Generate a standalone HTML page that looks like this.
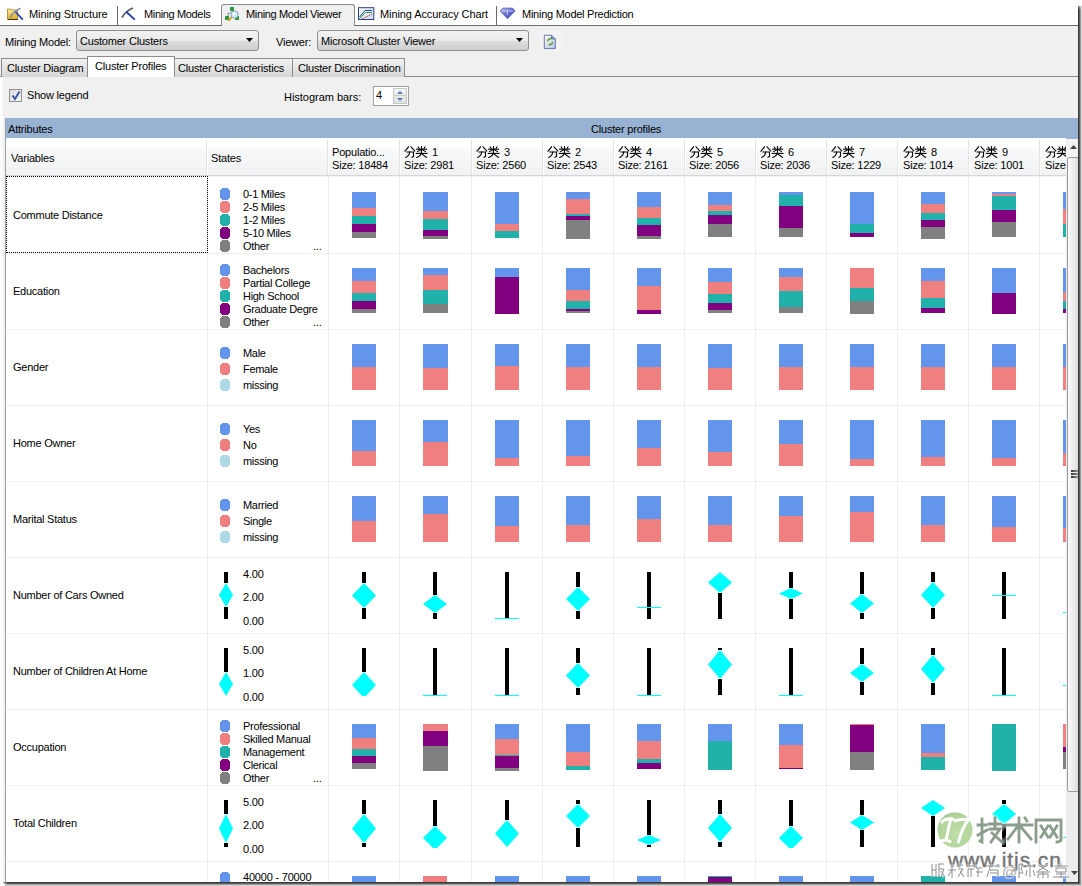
<!DOCTYPE html><html><head><meta charset="utf-8"><style>
html,body{margin:0;padding:0;}
body{width:1082px;height:886px;position:relative;overflow:hidden;background:#F0F0F0;font-family:"Liberation Sans", sans-serif;}
.t{position:absolute;white-space:nowrap;line-height:13px;font-size:11px;font-family:"Liberation Sans", sans-serif;letter-spacing:-0.2px;}
div{box-sizing:border-box;}
.dot{position:absolute;width:10px;height:12px;clip-path:polygon(2px 0,8px 0,8px 1px,9px 1px,9px 2px,10px 2px,10px 10px,9px 10px,9px 11px,8px 11px,8px 12px,2px 12px,2px 11px,1px 11px,1px 10px,0 10px,0 2px,1px 2px,1px 1px,2px 1px);}
</style></head><body>
<div style="position:absolute;left:0px;top:0px;width:1082px;height:25px;background:#FFFFFF;"></div>
<div style="position:absolute;left:0px;top:25px;width:1078px;height:1px;background:#6E6E6E;"></div>
<div style="position:absolute;left:221px;top:4px;width:134px;height:22px;background:#F0F0F0;border:1px solid #8C8C8C;border-bottom:none;border-radius:3px 3px 0 0;"></div>
<div style="position:absolute;left:117px;top:6px;width:1px;height:19px;background:#6A6A6A;"></div>
<div style="position:absolute;left:496px;top:6px;width:1px;height:19px;background:#6A6A6A;"></div>
<svg style="position:absolute;left:6px;top:7px" width="19" height="15" viewBox="6 7 19 15">
<defs><linearGradient id="fy" x1="0" y1="0" x2="0" y2="1"><stop offset="0" stop-color="#FCE9A0"/><stop offset="1" stop-color="#E3A812"/></linearGradient></defs>
<path d="M7.5 9 H11 L12 10 H17.5 V19.5 H7.5 Z" fill="url(#fy)" stroke="#A88420" stroke-width="0.8"/>
<path d="M8 19.5 H18" stroke="#3A3020" stroke-width="1"/>
<path d="M10 17.5 Q14 11 20.5 8.3" stroke="#8894A8" stroke-width="1.6" fill="none"/>
<path d="M15.5 12 L22.8 19.6" stroke="#1E3CB0" stroke-width="1.7"/></svg>
<div class="t" style="left:29px;top:8px;color:#000;letter-spacing:-0.1px;">Mining Structure</div>
<svg style="position:absolute;left:121px;top:7px" width="16" height="14" viewBox="121 7 16 14">
<path d="M122 17.5 Q125.5 11 133 8" stroke="#555C66" stroke-width="1.7" fill="none"/>
<path d="M126.5 12 L134.8 19.6" stroke="#1E3CB0" stroke-width="1.7"/></svg>
<div class="t" style="left:144px;top:8px;color:#000;letter-spacing:-0.35px;">Mining Models</div>
<svg style="position:absolute;left:224px;top:6px" width="18" height="17" viewBox="224 6 18 17">
<path d="M228 17 V13 H232 M233 9 V12 M237 15 L238 17" stroke="#888" stroke-width="1" fill="none"/>
<rect x="230" y="7" width="4" height="4" fill="#2E9A40"/><rect x="225" y="16" width="4" height="4" fill="#2E9A40"/><rect x="235" y="16" width="4" height="4" fill="#2E9A40"/>
<path d="M231.5 17 L228.5 21" stroke="#D8A010" stroke-width="2"/>
<circle cx="234.5" cy="14.5" r="3.6" fill="#CDEBFA" stroke="#88AACC" stroke-width="1"/><circle cx="233.8" cy="13.8" r="1.5" fill="#FFFFFF"/></svg>
<div class="t" style="left:246px;top:8px;color:#000;letter-spacing:-0.35px;">Mining Model Viewer</div>
<svg style="position:absolute;left:357px;top:7px" width="18" height="14" viewBox="357 7 18 14">
<defs><linearGradient id="fc" x1="0" y1="0" x2="1" y2="1"><stop offset="0" stop-color="#FFFFFF"/><stop offset="1" stop-color="#C8D8F0"/></linearGradient></defs>
<rect x="358.5" y="7.7" width="15.3" height="11.8" fill="url(#fc)" stroke="#2A3F7A" stroke-width="1"/>
<path d="M359.5 17 L365 10.5 H372" stroke="#2040B0" stroke-width="1" fill="none"/>
<path d="M359.5 18.5 L365.5 12.5 H372" stroke="#30A040" stroke-width="1" fill="none"/>
<path d="M362 19 L372 14" stroke="#C02020" stroke-width="1" stroke-dasharray="1.5 1" fill="none"/></svg>
<div class="t" style="left:380px;top:8px;color:#000;letter-spacing:-0.1px;">Mining Accuracy Chart</div>
<svg style="position:absolute;left:499px;top:7px" width="17" height="13" viewBox="499 7 17 13">
<defs><linearGradient id="fd" x1="0" y1="0" x2="1" y2="1"><stop offset="0" stop-color="#B8C0F8"/><stop offset="0.5" stop-color="#6670D0"/><stop offset="1" stop-color="#3A3E98"/></linearGradient></defs>
<path d="M500 11 L503 8 H512.5 L515 11 L507.5 18.7 Z" fill="url(#fd)" stroke="#4048A8" stroke-width="0.6"/>
<path d="M502 11 H513 M507.5 10 V15" stroke="#FFFFFF" stroke-width="0.7" opacity="0.8"/></svg>
<div class="t" style="left:522px;top:8px;color:#000;letter-spacing:-0.26px;">Mining Model Prediction</div>
<div class="t" style="left:5px;top:36px;color:#000;">Mining Model:</div>
<div style="position:absolute;left:76px;top:30px;width:183px;height:21px;border:1px solid #8E8F8F;border-radius:3px;background:linear-gradient(#F2F2F2 0%,#EBEBEB 50%,#DDDDDD 51%,#CFCFCF 100%);"></div>
<div class="t" style="left:80px;top:35px;color:#000;">Customer Clusters</div>
<svg style="position:absolute;left:246px;top:38px" width="8" height="5"><path d="M0 0 H7 L3.5 4 Z" fill="#000"/></svg>
<div class="t" style="left:276px;top:36px;color:#000;">Viewer:</div>
<div style="position:absolute;left:317px;top:30px;width:212px;height:21px;border:1px solid #8E8F8F;border-radius:3px;background:linear-gradient(#F2F2F2 0%,#EBEBEB 50%,#DDDDDD 51%,#CFCFCF 100%);"></div>
<div class="t" style="left:321px;top:35px;color:#000;">Microsoft Cluster Viewer</div>
<svg style="position:absolute;left:516px;top:38px" width="8" height="5"><path d="M0 0 H7 L3.5 4 Z" fill="#000"/></svg>
<div style="position:absolute;left:539px;top:30px;width:23px;height:22px;background:#F3F3F3;"></div>
<svg style="position:absolute;left:543px;top:34px" width="14" height="16" viewBox="543 34 14 16">
<defs><linearGradient id="fr" x1="0" y1="0" x2="1" y2="1"><stop offset="0" stop-color="#FFFFFF"/><stop offset="1" stop-color="#B8C0E0"/></linearGradient></defs>
<path d="M544.3 35.2 H551.5 L555.3 39 V48.6 H544.3 Z" fill="url(#fr)" stroke="#5A6A9A" stroke-width="0.9"/>
<path d="M551.5 35.2 V39 H555.3" fill="#8090C0" stroke="#4A5A8A" stroke-width="0.6"/>
<path d="M547.5 41.5 Q547.5 38.8 550.8 38.6" stroke="#5A9A20" stroke-width="1.2" fill="none"/><path d="M550 37.4 L551.8 38.6 L550 39.8 Z" fill="#5A9A20"/>
<path d="M552.5 42 Q552.5 44.6 549.2 44.8" stroke="#5A9A20" stroke-width="1.2" fill="none"/><path d="M550 43.6 L548.2 44.8 L550 46 Z" fill="#5A9A20"/></svg>
<div style="position:absolute;left:0px;top:76px;width:1082px;height:1px;background:#8C8C8C;"></div>
<div style="position:absolute;left:1px;top:58px;width:87px;height:19px;border:1px solid #8C8C8C;border-bottom:none;background:linear-gradient(#F2F2F2,#E4E4E4 50%,#D6D6D6);"></div>
<div class="t" style="left:7px;top:62px;color:#000;">Cluster Diagram</div>
<div style="position:absolute;left:174px;top:58px;width:119px;height:19px;border:1px solid #8C8C8C;border-bottom:none;background:linear-gradient(#F2F2F2,#E4E4E4 50%,#D6D6D6);"></div>
<div class="t" style="left:178px;top:62px;color:#000;">Cluster Characteristics</div>
<div style="position:absolute;left:292px;top:58px;width:113px;height:19px;border:1px solid #8C8C8C;border-bottom:none;background:linear-gradient(#F2F2F2,#E4E4E4 50%,#D6D6D6);"></div>
<div class="t" style="left:298px;top:62px;color:#000;">Cluster Discrimination</div>
<div style="position:absolute;left:87px;top:56px;width:88px;height:21px;border:1px solid #8C8C8C;border-bottom:none;background:#FFFFFF;"></div>
<div class="t" style="left:95px;top:60px;color:#000;">Cluster Profiles</div>
<div style="position:absolute;left:3px;top:77px;width:1079px;height:1px;background:#F0F0F0;"></div>
<div style="position:absolute;left:0px;top:77px;width:3px;height:810px;background:#FCFCFC;"></div>
<div style="position:absolute;left:9px;top:89px;width:13px;height:13px;border:1px solid #8E8F8F;background:linear-gradient(135deg,#DCDCDC,#F6F6F6);"></div>
<svg style="position:absolute;left:11px;top:90px" width="10" height="11"><path d="M1.5 5.5 L4 9 L8.5 1.5" stroke="#3B56A8" stroke-width="2" fill="none"/></svg>
<div class="t" style="left:27px;top:89px;color:#000;">Show legend</div>
<div class="t" style="left:284px;top:91px;color:#000;letter-spacing:-0.03px;">Histogram bars:</div>
<div style="position:absolute;left:373px;top:86px;width:36px;height:20px;border:1px solid #A0A0A0;background:#fff;"></div>
<div class="t" style="left:376px;top:89px;color:#000;">4</div>
<div style="position:absolute;left:393px;top:88px;width:14px;height:16px;border:1px solid #C8C8C8;background:linear-gradient(#F4F4F4,#E0E0E0);"></div>
<div style="position:absolute;left:394px;top:95px;width:12px;height:1px;background:#C8C8C8;"></div>
<svg style="position:absolute;left:396px;top:90px" width="8" height="13"><path d="M1 4 L4 1 L7 4 Z" fill="#5A78B8"/><path d="M1 8 L4 11 L7 8 Z" fill="#5A78B8"/></svg>
<div style="position:absolute;left:5px;top:118px;width:1073px;height:21px;background:#97B2D3;"></div>
<div class="t" style="left:8px;top:123px;color:#000;">Attributes</div>
<div class="t" style="left:591px;top:123px;color:#000;">Cluster profiles</div>
<div style="position:absolute;left:5px;top:138px;width:1061px;height:748px;background:#FFFFFF;"></div>
<div style="position:absolute;left:5px;top:118px;width:1px;height:768px;background:#9EA0AA;"></div>
<div style="position:absolute;left:6px;top:148px;width:1060px;height:27px;background:linear-gradient(#F8F9FA,#F1F2F4);"></div>
<div style="position:absolute;left:6px;top:175px;width:1060px;height:1px;background:#D5D5D5;"></div>
<div style="position:absolute;left:206px;top:140px;width:1px;height:35px;background:#E3E3E3;"></div>
<div style="position:absolute;left:207px;top:148px;width:1px;height:27px;background:#FFFFFF;"></div>
<div style="position:absolute;left:327px;top:140px;width:1px;height:35px;background:#E3E3E3;"></div>
<div style="position:absolute;left:328px;top:148px;width:1px;height:27px;background:#FFFFFF;"></div>
<div style="position:absolute;left:399px;top:140px;width:1px;height:35px;background:#E3E3E3;"></div>
<div style="position:absolute;left:400px;top:148px;width:1px;height:27px;background:#FFFFFF;"></div>
<div style="position:absolute;left:471px;top:140px;width:1px;height:35px;background:#E3E3E3;"></div>
<div style="position:absolute;left:472px;top:148px;width:1px;height:27px;background:#FFFFFF;"></div>
<div style="position:absolute;left:542px;top:140px;width:1px;height:35px;background:#E3E3E3;"></div>
<div style="position:absolute;left:543px;top:148px;width:1px;height:27px;background:#FFFFFF;"></div>
<div style="position:absolute;left:613px;top:140px;width:1px;height:35px;background:#E3E3E3;"></div>
<div style="position:absolute;left:614px;top:148px;width:1px;height:27px;background:#FFFFFF;"></div>
<div style="position:absolute;left:684px;top:140px;width:1px;height:35px;background:#E3E3E3;"></div>
<div style="position:absolute;left:685px;top:148px;width:1px;height:27px;background:#FFFFFF;"></div>
<div style="position:absolute;left:755px;top:140px;width:1px;height:35px;background:#E3E3E3;"></div>
<div style="position:absolute;left:756px;top:148px;width:1px;height:27px;background:#FFFFFF;"></div>
<div style="position:absolute;left:826px;top:140px;width:1px;height:35px;background:#E3E3E3;"></div>
<div style="position:absolute;left:827px;top:148px;width:1px;height:27px;background:#FFFFFF;"></div>
<div style="position:absolute;left:897px;top:140px;width:1px;height:35px;background:#E3E3E3;"></div>
<div style="position:absolute;left:898px;top:148px;width:1px;height:27px;background:#FFFFFF;"></div>
<div style="position:absolute;left:968px;top:140px;width:1px;height:35px;background:#E3E3E3;"></div>
<div style="position:absolute;left:969px;top:148px;width:1px;height:27px;background:#FFFFFF;"></div>
<div style="position:absolute;left:1039px;top:140px;width:1px;height:35px;background:#E3E3E3;"></div>
<div style="position:absolute;left:1040px;top:148px;width:1px;height:27px;background:#FFFFFF;"></div>
<div class="t" style="left:11px;top:152px;color:#000;">Variables</div>
<div class="t" style="left:211px;top:152px;color:#000;">States</div>
<div class="t" style="left:332px;top:146px;color:#000;">Populatio...</div>
<div class="t" style="left:332px;top:159px;color:#000;">Size: 18484</div>
<svg style="position:absolute;left:404px;top:146px" width="24" height="12" viewBox="0 0 24 12"><g fill="none" stroke="#000" stroke-width="1.1" stroke-linecap="square">
<path d="M4.5 0.8 L1 5.2"/><path d="M7 0.8 L10.8 5"/><path d="M3 6 H9.5 V10.5 L8 11.3"/><path d="M5.6 6.2 Q5.4 9.6 1.8 11.4"/>
<path d="M14.2 1 L15.2 2.4"/><path d="M21 1 L20 2.4"/><path d="M17.5 0.3 V5"/><path d="M12.6 3.2 H22.6"/><path d="M17.3 3.4 L13.5 5.6"/><path d="M17.7 3.4 L21.5 5.6"/>
<path d="M12.3 7.4 H23"/><path d="M17.5 5.6 Q17.4 9.8 12.8 11.5"/><path d="M17.8 8 L22.5 11.4"/></g></svg>
<div class="t" style="left:432px;top:146px;color:#000;">1</div>
<div class="t" style="left:404px;top:159px;color:#000;">Size: 2981</div>
<svg style="position:absolute;left:476px;top:146px" width="24" height="12" viewBox="0 0 24 12"><g fill="none" stroke="#000" stroke-width="1.1" stroke-linecap="square">
<path d="M4.5 0.8 L1 5.2"/><path d="M7 0.8 L10.8 5"/><path d="M3 6 H9.5 V10.5 L8 11.3"/><path d="M5.6 6.2 Q5.4 9.6 1.8 11.4"/>
<path d="M14.2 1 L15.2 2.4"/><path d="M21 1 L20 2.4"/><path d="M17.5 0.3 V5"/><path d="M12.6 3.2 H22.6"/><path d="M17.3 3.4 L13.5 5.6"/><path d="M17.7 3.4 L21.5 5.6"/>
<path d="M12.3 7.4 H23"/><path d="M17.5 5.6 Q17.4 9.8 12.8 11.5"/><path d="M17.8 8 L22.5 11.4"/></g></svg>
<div class="t" style="left:504px;top:146px;color:#000;">3</div>
<div class="t" style="left:476px;top:159px;color:#000;">Size: 2560</div>
<svg style="position:absolute;left:547px;top:146px" width="24" height="12" viewBox="0 0 24 12"><g fill="none" stroke="#000" stroke-width="1.1" stroke-linecap="square">
<path d="M4.5 0.8 L1 5.2"/><path d="M7 0.8 L10.8 5"/><path d="M3 6 H9.5 V10.5 L8 11.3"/><path d="M5.6 6.2 Q5.4 9.6 1.8 11.4"/>
<path d="M14.2 1 L15.2 2.4"/><path d="M21 1 L20 2.4"/><path d="M17.5 0.3 V5"/><path d="M12.6 3.2 H22.6"/><path d="M17.3 3.4 L13.5 5.6"/><path d="M17.7 3.4 L21.5 5.6"/>
<path d="M12.3 7.4 H23"/><path d="M17.5 5.6 Q17.4 9.8 12.8 11.5"/><path d="M17.8 8 L22.5 11.4"/></g></svg>
<div class="t" style="left:575px;top:146px;color:#000;">2</div>
<div class="t" style="left:547px;top:159px;color:#000;">Size: 2543</div>
<svg style="position:absolute;left:618px;top:146px" width="24" height="12" viewBox="0 0 24 12"><g fill="none" stroke="#000" stroke-width="1.1" stroke-linecap="square">
<path d="M4.5 0.8 L1 5.2"/><path d="M7 0.8 L10.8 5"/><path d="M3 6 H9.5 V10.5 L8 11.3"/><path d="M5.6 6.2 Q5.4 9.6 1.8 11.4"/>
<path d="M14.2 1 L15.2 2.4"/><path d="M21 1 L20 2.4"/><path d="M17.5 0.3 V5"/><path d="M12.6 3.2 H22.6"/><path d="M17.3 3.4 L13.5 5.6"/><path d="M17.7 3.4 L21.5 5.6"/>
<path d="M12.3 7.4 H23"/><path d="M17.5 5.6 Q17.4 9.8 12.8 11.5"/><path d="M17.8 8 L22.5 11.4"/></g></svg>
<div class="t" style="left:646px;top:146px;color:#000;">4</div>
<div class="t" style="left:618px;top:159px;color:#000;">Size: 2161</div>
<svg style="position:absolute;left:689px;top:146px" width="24" height="12" viewBox="0 0 24 12"><g fill="none" stroke="#000" stroke-width="1.1" stroke-linecap="square">
<path d="M4.5 0.8 L1 5.2"/><path d="M7 0.8 L10.8 5"/><path d="M3 6 H9.5 V10.5 L8 11.3"/><path d="M5.6 6.2 Q5.4 9.6 1.8 11.4"/>
<path d="M14.2 1 L15.2 2.4"/><path d="M21 1 L20 2.4"/><path d="M17.5 0.3 V5"/><path d="M12.6 3.2 H22.6"/><path d="M17.3 3.4 L13.5 5.6"/><path d="M17.7 3.4 L21.5 5.6"/>
<path d="M12.3 7.4 H23"/><path d="M17.5 5.6 Q17.4 9.8 12.8 11.5"/><path d="M17.8 8 L22.5 11.4"/></g></svg>
<div class="t" style="left:717px;top:146px;color:#000;">5</div>
<div class="t" style="left:689px;top:159px;color:#000;">Size: 2056</div>
<svg style="position:absolute;left:760px;top:146px" width="24" height="12" viewBox="0 0 24 12"><g fill="none" stroke="#000" stroke-width="1.1" stroke-linecap="square">
<path d="M4.5 0.8 L1 5.2"/><path d="M7 0.8 L10.8 5"/><path d="M3 6 H9.5 V10.5 L8 11.3"/><path d="M5.6 6.2 Q5.4 9.6 1.8 11.4"/>
<path d="M14.2 1 L15.2 2.4"/><path d="M21 1 L20 2.4"/><path d="M17.5 0.3 V5"/><path d="M12.6 3.2 H22.6"/><path d="M17.3 3.4 L13.5 5.6"/><path d="M17.7 3.4 L21.5 5.6"/>
<path d="M12.3 7.4 H23"/><path d="M17.5 5.6 Q17.4 9.8 12.8 11.5"/><path d="M17.8 8 L22.5 11.4"/></g></svg>
<div class="t" style="left:788px;top:146px;color:#000;">6</div>
<div class="t" style="left:760px;top:159px;color:#000;">Size: 2036</div>
<svg style="position:absolute;left:831px;top:146px" width="24" height="12" viewBox="0 0 24 12"><g fill="none" stroke="#000" stroke-width="1.1" stroke-linecap="square">
<path d="M4.5 0.8 L1 5.2"/><path d="M7 0.8 L10.8 5"/><path d="M3 6 H9.5 V10.5 L8 11.3"/><path d="M5.6 6.2 Q5.4 9.6 1.8 11.4"/>
<path d="M14.2 1 L15.2 2.4"/><path d="M21 1 L20 2.4"/><path d="M17.5 0.3 V5"/><path d="M12.6 3.2 H22.6"/><path d="M17.3 3.4 L13.5 5.6"/><path d="M17.7 3.4 L21.5 5.6"/>
<path d="M12.3 7.4 H23"/><path d="M17.5 5.6 Q17.4 9.8 12.8 11.5"/><path d="M17.8 8 L22.5 11.4"/></g></svg>
<div class="t" style="left:859px;top:146px;color:#000;">7</div>
<div class="t" style="left:831px;top:159px;color:#000;">Size: 1229</div>
<svg style="position:absolute;left:903px;top:146px" width="24" height="12" viewBox="0 0 24 12"><g fill="none" stroke="#000" stroke-width="1.1" stroke-linecap="square">
<path d="M4.5 0.8 L1 5.2"/><path d="M7 0.8 L10.8 5"/><path d="M3 6 H9.5 V10.5 L8 11.3"/><path d="M5.6 6.2 Q5.4 9.6 1.8 11.4"/>
<path d="M14.2 1 L15.2 2.4"/><path d="M21 1 L20 2.4"/><path d="M17.5 0.3 V5"/><path d="M12.6 3.2 H22.6"/><path d="M17.3 3.4 L13.5 5.6"/><path d="M17.7 3.4 L21.5 5.6"/>
<path d="M12.3 7.4 H23"/><path d="M17.5 5.6 Q17.4 9.8 12.8 11.5"/><path d="M17.8 8 L22.5 11.4"/></g></svg>
<div class="t" style="left:931px;top:146px;color:#000;">8</div>
<div class="t" style="left:903px;top:159px;color:#000;">Size: 1014</div>
<svg style="position:absolute;left:974px;top:146px" width="24" height="12" viewBox="0 0 24 12"><g fill="none" stroke="#000" stroke-width="1.1" stroke-linecap="square">
<path d="M4.5 0.8 L1 5.2"/><path d="M7 0.8 L10.8 5"/><path d="M3 6 H9.5 V10.5 L8 11.3"/><path d="M5.6 6.2 Q5.4 9.6 1.8 11.4"/>
<path d="M14.2 1 L15.2 2.4"/><path d="M21 1 L20 2.4"/><path d="M17.5 0.3 V5"/><path d="M12.6 3.2 H22.6"/><path d="M17.3 3.4 L13.5 5.6"/><path d="M17.7 3.4 L21.5 5.6"/>
<path d="M12.3 7.4 H23"/><path d="M17.5 5.6 Q17.4 9.8 12.8 11.5"/><path d="M17.8 8 L22.5 11.4"/></g></svg>
<div class="t" style="left:1002px;top:146px;color:#000;">9</div>
<div class="t" style="left:974px;top:159px;color:#000;">Size: 1001</div>
<svg style="position:absolute;left:1045px;top:146px" width="24" height="12" viewBox="0 0 24 12"><g fill="none" stroke="#000" stroke-width="1.1" stroke-linecap="square">
<path d="M4.5 0.8 L1 5.2"/><path d="M7 0.8 L10.8 5"/><path d="M3 6 H9.5 V10.5 L8 11.3"/><path d="M5.6 6.2 Q5.4 9.6 1.8 11.4"/>
<path d="M14.2 1 L15.2 2.4"/><path d="M21 1 L20 2.4"/><path d="M17.5 0.3 V5"/><path d="M12.6 3.2 H22.6"/><path d="M17.3 3.4 L13.5 5.6"/><path d="M17.7 3.4 L21.5 5.6"/>
<path d="M12.3 7.4 H23"/><path d="M17.5 5.6 Q17.4 9.8 12.8 11.5"/><path d="M17.8 8 L22.5 11.4"/></g></svg>
<div class="t" style="left:1045px;top:159px;color:#000;">Size:</div>
<div style="position:absolute;left:6px;top:176px;width:1060px;height:1px;background:#F4F4F4;"></div>
<div style="position:absolute;left:6px;top:253px;width:1060px;height:1px;background:#EEEEEE;"></div>
<div style="position:absolute;left:6px;top:329px;width:1060px;height:1px;background:#EEEEEE;"></div>
<div style="position:absolute;left:6px;top:405px;width:1060px;height:1px;background:#EEEEEE;"></div>
<div style="position:absolute;left:6px;top:481px;width:1060px;height:1px;background:#EEEEEE;"></div>
<div style="position:absolute;left:6px;top:557px;width:1060px;height:1px;background:#EEEEEE;"></div>
<div style="position:absolute;left:6px;top:633px;width:1060px;height:1px;background:#EEEEEE;"></div>
<div style="position:absolute;left:6px;top:709px;width:1060px;height:1px;background:#EEEEEE;"></div>
<div style="position:absolute;left:6px;top:785px;width:1060px;height:1px;background:#EEEEEE;"></div>
<div style="position:absolute;left:6px;top:861px;width:1060px;height:1px;background:#EEEEEE;"></div>
<div style="position:absolute;left:207px;top:177px;width:1px;height:710px;background:#EEEEEE;"></div>
<div style="position:absolute;left:328px;top:177px;width:1px;height:710px;background:#EEEEEE;"></div>
<div style="position:absolute;left:399px;top:177px;width:1px;height:710px;background:#EEEEEE;"></div>
<div style="position:absolute;left:471px;top:177px;width:1px;height:710px;background:#EEEEEE;"></div>
<div style="position:absolute;left:542px;top:177px;width:1px;height:710px;background:#EEEEEE;"></div>
<div style="position:absolute;left:613px;top:177px;width:1px;height:710px;background:#EEEEEE;"></div>
<div style="position:absolute;left:684px;top:177px;width:1px;height:710px;background:#EEEEEE;"></div>
<div style="position:absolute;left:755px;top:177px;width:1px;height:710px;background:#EEEEEE;"></div>
<div style="position:absolute;left:826px;top:177px;width:1px;height:710px;background:#EEEEEE;"></div>
<div style="position:absolute;left:897px;top:177px;width:1px;height:710px;background:#EEEEEE;"></div>
<div style="position:absolute;left:968px;top:177px;width:1px;height:710px;background:#EEEEEE;"></div>
<div style="position:absolute;left:1039px;top:177px;width:1px;height:710px;background:#EEEEEE;"></div>
<div style="position:absolute;left:6px;top:176px;width:202px;height:77px;border:1px dotted #000;"></div>
<div class="t" style="left:13px;top:209px;color:#000;letter-spacing:-0.25px;">Commute Distance</div>
<div class="t" style="left:13px;top:285px;color:#000;letter-spacing:-0.25px;">Education</div>
<div class="t" style="left:13px;top:361px;color:#000;letter-spacing:-0.25px;">Gender</div>
<div class="t" style="left:13px;top:437px;color:#000;letter-spacing:-0.25px;">Home Owner</div>
<div class="t" style="left:13px;top:513px;color:#000;letter-spacing:-0.25px;">Marital Status</div>
<div class="t" style="left:13px;top:589px;color:#000;letter-spacing:-0.25px;">Number of Cars Owned</div>
<div class="t" style="left:13px;top:665px;color:#000;letter-spacing:-0.25px;">Number of Children At Home</div>
<div class="t" style="left:13px;top:741px;color:#000;letter-spacing:-0.25px;">Occupation</div>
<div class="t" style="left:13px;top:817px;color:#000;letter-spacing:-0.25px;">Total Children</div>
<div class="dot" style="left:220px;top:188px;background:#6495ED;"></div>
<div class="t" style="left:243px;top:188px;color:#000;letter-spacing:-0.3px;">0-1 Miles</div>
<div class="dot" style="left:220px;top:201px;background:#F08080;"></div>
<div class="t" style="left:243px;top:201px;color:#000;letter-spacing:-0.3px;">2-5 Miles</div>
<div class="dot" style="left:220px;top:214px;background:#20B2AA;"></div>
<div class="t" style="left:243px;top:214px;color:#000;letter-spacing:-0.3px;">1-2 Miles</div>
<div class="dot" style="left:220px;top:227px;background:#800080;"></div>
<div class="t" style="left:243px;top:227px;color:#000;letter-spacing:-0.3px;">5-10 Miles</div>
<div class="dot" style="left:220px;top:240px;background:#808080;"></div>
<div class="t" style="left:243px;top:240px;color:#000;letter-spacing:-0.3px;">Other</div>
<div class="t" style="left:313px;top:240px;color:#000;">...</div>
<div class="dot" style="left:220px;top:264px;background:#6495ED;"></div>
<div class="t" style="left:243px;top:264px;color:#000;letter-spacing:-0.3px;">Bachelors</div>
<div class="dot" style="left:220px;top:277px;background:#F08080;"></div>
<div class="t" style="left:243px;top:277px;color:#000;letter-spacing:-0.3px;">Partial College</div>
<div class="dot" style="left:220px;top:290px;background:#20B2AA;"></div>
<div class="t" style="left:243px;top:290px;color:#000;letter-spacing:-0.3px;">High School</div>
<div class="dot" style="left:220px;top:303px;background:#800080;"></div>
<div class="t" style="left:243px;top:303px;color:#000;letter-spacing:-0.3px;">Graduate Degre</div>
<div class="dot" style="left:220px;top:316px;background:#808080;"></div>
<div class="t" style="left:243px;top:316px;color:#000;letter-spacing:-0.3px;">Other</div>
<div class="t" style="left:313px;top:316px;color:#000;">...</div>
<div class="dot" style="left:220px;top:347px;background:#6495ED;"></div>
<div class="t" style="left:243px;top:347px;color:#000;letter-spacing:-0.3px;">Male</div>
<div class="dot" style="left:220px;top:363px;background:#F08080;"></div>
<div class="t" style="left:243px;top:363px;color:#000;letter-spacing:-0.3px;">Female</div>
<div class="dot" style="left:220px;top:379px;background:#ADD8E6;"></div>
<div class="t" style="left:243px;top:379px;color:#000;letter-spacing:-0.3px;">missing</div>
<div class="dot" style="left:220px;top:423px;background:#6495ED;"></div>
<div class="t" style="left:243px;top:423px;color:#000;letter-spacing:-0.3px;">Yes</div>
<div class="dot" style="left:220px;top:439px;background:#F08080;"></div>
<div class="t" style="left:243px;top:439px;color:#000;letter-spacing:-0.3px;">No</div>
<div class="dot" style="left:220px;top:455px;background:#ADD8E6;"></div>
<div class="t" style="left:243px;top:455px;color:#000;letter-spacing:-0.3px;">missing</div>
<div class="dot" style="left:220px;top:499px;background:#6495ED;"></div>
<div class="t" style="left:243px;top:499px;color:#000;letter-spacing:-0.3px;">Married</div>
<div class="dot" style="left:220px;top:515px;background:#F08080;"></div>
<div class="t" style="left:243px;top:515px;color:#000;letter-spacing:-0.3px;">Single</div>
<div class="dot" style="left:220px;top:531px;background:#ADD8E6;"></div>
<div class="t" style="left:243px;top:531px;color:#000;letter-spacing:-0.3px;">missing</div>
<div class="dot" style="left:220px;top:720px;background:#6495ED;"></div>
<div class="t" style="left:243px;top:720px;color:#000;letter-spacing:-0.3px;">Professional</div>
<div class="dot" style="left:220px;top:733px;background:#F08080;"></div>
<div class="t" style="left:243px;top:733px;color:#000;letter-spacing:-0.3px;">Skilled Manual</div>
<div class="dot" style="left:220px;top:746px;background:#20B2AA;"></div>
<div class="t" style="left:243px;top:746px;color:#000;letter-spacing:-0.3px;">Management</div>
<div class="dot" style="left:220px;top:759px;background:#800080;"></div>
<div class="t" style="left:243px;top:759px;color:#000;letter-spacing:-0.3px;">Clerical</div>
<div class="dot" style="left:220px;top:772px;background:#808080;"></div>
<div class="t" style="left:243px;top:772px;color:#000;letter-spacing:-0.3px;">Other</div>
<div class="t" style="left:313px;top:772px;color:#000;">...</div>
<div style="position:absolute;left:352px;top:192px;width:24px;height:16px;background:#6495ED;"></div>
<div style="position:absolute;left:352px;top:208px;width:24px;height:8px;background:#F08080;"></div>
<div style="position:absolute;left:352px;top:216px;width:24px;height:8px;background:#20B2AA;"></div>
<div style="position:absolute;left:352px;top:224px;width:24px;height:8px;background:#800080;"></div>
<div style="position:absolute;left:352px;top:232px;width:24px;height:6px;background:#808080;"></div>
<div style="position:absolute;left:423px;top:192px;width:25px;height:19px;background:#6495ED;"></div>
<div style="position:absolute;left:423px;top:211px;width:25px;height:8px;background:#F08080;"></div>
<div style="position:absolute;left:423px;top:219px;width:25px;height:11px;background:#20B2AA;"></div>
<div style="position:absolute;left:423px;top:230px;width:25px;height:6px;background:#800080;"></div>
<div style="position:absolute;left:423px;top:236px;width:25px;height:3px;background:#808080;"></div>
<div style="position:absolute;left:495px;top:192px;width:24px;height:32px;background:#6495ED;"></div>
<div style="position:absolute;left:495px;top:224px;width:24px;height:7px;background:#F08080;"></div>
<div style="position:absolute;left:495px;top:231px;width:24px;height:7px;background:#20B2AA;"></div>
<div style="position:absolute;left:566px;top:192px;width:24px;height:7px;background:#6495ED;"></div>
<div style="position:absolute;left:566px;top:199px;width:24px;height:15px;background:#F08080;"></div>
<div style="position:absolute;left:566px;top:214px;width:24px;height:2px;background:#20B2AA;"></div>
<div style="position:absolute;left:566px;top:216px;width:24px;height:4px;background:#800080;"></div>
<div style="position:absolute;left:566px;top:220px;width:24px;height:19px;background:#808080;"></div>
<div style="position:absolute;left:637px;top:192px;width:24px;height:15px;background:#6495ED;"></div>
<div style="position:absolute;left:637px;top:207px;width:24px;height:11px;background:#F08080;"></div>
<div style="position:absolute;left:637px;top:218px;width:24px;height:7px;background:#20B2AA;"></div>
<div style="position:absolute;left:637px;top:225px;width:24px;height:11px;background:#800080;"></div>
<div style="position:absolute;left:637px;top:236px;width:24px;height:3px;background:#808080;"></div>
<div style="position:absolute;left:708px;top:192px;width:24px;height:13px;background:#6495ED;"></div>
<div style="position:absolute;left:708px;top:205px;width:24px;height:6px;background:#F08080;"></div>
<div style="position:absolute;left:708px;top:211px;width:24px;height:4px;background:#20B2AA;"></div>
<div style="position:absolute;left:708px;top:215px;width:24px;height:9px;background:#800080;"></div>
<div style="position:absolute;left:708px;top:224px;width:24px;height:13px;background:#808080;"></div>
<div style="position:absolute;left:779px;top:192px;width:24px;height:3px;background:#6495ED;"></div>
<div style="position:absolute;left:779px;top:195px;width:24px;height:11px;background:#20B2AA;"></div>
<div style="position:absolute;left:779px;top:206px;width:24px;height:22px;background:#800080;"></div>
<div style="position:absolute;left:779px;top:228px;width:24px;height:9px;background:#808080;"></div>
<div style="position:absolute;left:850px;top:192px;width:24px;height:32px;background:#6495ED;"></div>
<div style="position:absolute;left:850px;top:224px;width:24px;height:9px;background:#20B2AA;"></div>
<div style="position:absolute;left:850px;top:233px;width:24px;height:4px;background:#800080;"></div>
<div style="position:absolute;left:921px;top:192px;width:24px;height:12px;background:#6495ED;"></div>
<div style="position:absolute;left:921px;top:204px;width:24px;height:9px;background:#F08080;"></div>
<div style="position:absolute;left:921px;top:213px;width:24px;height:7px;background:#20B2AA;"></div>
<div style="position:absolute;left:921px;top:220px;width:24px;height:7px;background:#800080;"></div>
<div style="position:absolute;left:921px;top:227px;width:24px;height:12px;background:#808080;"></div>
<div style="position:absolute;left:992px;top:192px;width:24px;height:2px;background:#6495ED;"></div>
<div style="position:absolute;left:992px;top:194px;width:24px;height:2px;background:#F08080;"></div>
<div style="position:absolute;left:992px;top:196px;width:24px;height:14px;background:#20B2AA;"></div>
<div style="position:absolute;left:992px;top:210px;width:24px;height:12px;background:#800080;"></div>
<div style="position:absolute;left:992px;top:222px;width:24px;height:15px;background:#808080;"></div>
<div style="position:absolute;left:1063px;top:192px;width:3px;height:17px;background:#6495ED;"></div>
<div style="position:absolute;left:1063px;top:209px;width:3px;height:15px;background:#F08080;"></div>
<div style="position:absolute;left:1063px;top:224px;width:3px;height:13px;background:#20B2AA;"></div>
<div style="position:absolute;left:352px;top:268px;width:24px;height:13px;background:#6495ED;"></div>
<div style="position:absolute;left:352px;top:281px;width:24px;height:12px;background:#F08080;"></div>
<div style="position:absolute;left:352px;top:293px;width:24px;height:8px;background:#20B2AA;"></div>
<div style="position:absolute;left:352px;top:301px;width:24px;height:8px;background:#800080;"></div>
<div style="position:absolute;left:352px;top:309px;width:24px;height:4px;background:#808080;"></div>
<div style="position:absolute;left:423px;top:268px;width:25px;height:7px;background:#6495ED;"></div>
<div style="position:absolute;left:423px;top:275px;width:25px;height:15px;background:#F08080;"></div>
<div style="position:absolute;left:423px;top:290px;width:25px;height:14px;background:#20B2AA;"></div>
<div style="position:absolute;left:423px;top:304px;width:25px;height:9px;background:#808080;"></div>
<div style="position:absolute;left:495px;top:268px;width:24px;height:9px;background:#6495ED;"></div>
<div style="position:absolute;left:495px;top:277px;width:24px;height:37px;background:#800080;"></div>
<div style="position:absolute;left:566px;top:268px;width:24px;height:22px;background:#6495ED;"></div>
<div style="position:absolute;left:566px;top:290px;width:24px;height:11px;background:#F08080;"></div>
<div style="position:absolute;left:566px;top:301px;width:24px;height:8px;background:#20B2AA;"></div>
<div style="position:absolute;left:566px;top:309px;width:24px;height:2px;background:#800080;"></div>
<div style="position:absolute;left:566px;top:311px;width:24px;height:2px;background:#808080;"></div>
<div style="position:absolute;left:637px;top:268px;width:24px;height:18px;background:#6495ED;"></div>
<div style="position:absolute;left:637px;top:286px;width:24px;height:24px;background:#F08080;"></div>
<div style="position:absolute;left:637px;top:310px;width:24px;height:4px;background:#800080;"></div>
<div style="position:absolute;left:708px;top:268px;width:24px;height:14px;background:#6495ED;"></div>
<div style="position:absolute;left:708px;top:282px;width:24px;height:12px;background:#F08080;"></div>
<div style="position:absolute;left:708px;top:294px;width:24px;height:9px;background:#20B2AA;"></div>
<div style="position:absolute;left:708px;top:303px;width:24px;height:7px;background:#800080;"></div>
<div style="position:absolute;left:708px;top:310px;width:24px;height:3px;background:#808080;"></div>
<div style="position:absolute;left:779px;top:268px;width:24px;height:9px;background:#6495ED;"></div>
<div style="position:absolute;left:779px;top:277px;width:24px;height:14px;background:#F08080;"></div>
<div style="position:absolute;left:779px;top:291px;width:24px;height:16px;background:#20B2AA;"></div>
<div style="position:absolute;left:779px;top:307px;width:24px;height:6px;background:#808080;"></div>
<div style="position:absolute;left:850px;top:268px;width:24px;height:20px;background:#F08080;"></div>
<div style="position:absolute;left:850px;top:288px;width:24px;height:13px;background:#20B2AA;"></div>
<div style="position:absolute;left:850px;top:301px;width:24px;height:13px;background:#808080;"></div>
<div style="position:absolute;left:921px;top:268px;width:24px;height:13px;background:#6495ED;"></div>
<div style="position:absolute;left:921px;top:281px;width:24px;height:17px;background:#F08080;"></div>
<div style="position:absolute;left:921px;top:298px;width:24px;height:10px;background:#20B2AA;"></div>
<div style="position:absolute;left:921px;top:308px;width:24px;height:5px;background:#800080;"></div>
<div style="position:absolute;left:992px;top:268px;width:24px;height:25px;background:#6495ED;"></div>
<div style="position:absolute;left:992px;top:293px;width:24px;height:21px;background:#800080;"></div>
<div style="position:absolute;left:1063px;top:268px;width:3px;height:24px;background:#6495ED;"></div>
<div style="position:absolute;left:1063px;top:292px;width:3px;height:9px;background:#F08080;"></div>
<div style="position:absolute;left:1063px;top:301px;width:3px;height:8px;background:#20B2AA;"></div>
<div style="position:absolute;left:1063px;top:309px;width:3px;height:4px;background:#800080;"></div>
<div style="position:absolute;left:352px;top:344px;width:24px;height:23px;background:#6495ED;"></div>
<div style="position:absolute;left:352px;top:367px;width:24px;height:23px;background:#F08080;"></div>
<div style="position:absolute;left:423px;top:344px;width:25px;height:24px;background:#6495ED;"></div>
<div style="position:absolute;left:423px;top:368px;width:25px;height:22px;background:#F08080;"></div>
<div style="position:absolute;left:495px;top:344px;width:24px;height:22px;background:#6495ED;"></div>
<div style="position:absolute;left:495px;top:366px;width:24px;height:24px;background:#F08080;"></div>
<div style="position:absolute;left:566px;top:344px;width:24px;height:23px;background:#6495ED;"></div>
<div style="position:absolute;left:566px;top:367px;width:24px;height:23px;background:#F08080;"></div>
<div style="position:absolute;left:637px;top:344px;width:24px;height:23px;background:#6495ED;"></div>
<div style="position:absolute;left:637px;top:367px;width:24px;height:23px;background:#F08080;"></div>
<div style="position:absolute;left:708px;top:344px;width:24px;height:24px;background:#6495ED;"></div>
<div style="position:absolute;left:708px;top:368px;width:24px;height:22px;background:#F08080;"></div>
<div style="position:absolute;left:779px;top:344px;width:24px;height:23px;background:#6495ED;"></div>
<div style="position:absolute;left:779px;top:367px;width:24px;height:23px;background:#F08080;"></div>
<div style="position:absolute;left:850px;top:344px;width:24px;height:23px;background:#6495ED;"></div>
<div style="position:absolute;left:850px;top:367px;width:24px;height:23px;background:#F08080;"></div>
<div style="position:absolute;left:921px;top:344px;width:24px;height:23px;background:#6495ED;"></div>
<div style="position:absolute;left:921px;top:367px;width:24px;height:23px;background:#F08080;"></div>
<div style="position:absolute;left:992px;top:344px;width:24px;height:23px;background:#6495ED;"></div>
<div style="position:absolute;left:992px;top:367px;width:24px;height:23px;background:#F08080;"></div>
<div style="position:absolute;left:1063px;top:344px;width:3px;height:23px;background:#6495ED;"></div>
<div style="position:absolute;left:1063px;top:367px;width:3px;height:23px;background:#F08080;"></div>
<div style="position:absolute;left:352px;top:420px;width:24px;height:31px;background:#6495ED;"></div>
<div style="position:absolute;left:352px;top:451px;width:24px;height:15px;background:#F08080;"></div>
<div style="position:absolute;left:423px;top:420px;width:25px;height:22px;background:#6495ED;"></div>
<div style="position:absolute;left:423px;top:442px;width:25px;height:24px;background:#F08080;"></div>
<div style="position:absolute;left:495px;top:420px;width:24px;height:38px;background:#6495ED;"></div>
<div style="position:absolute;left:495px;top:458px;width:24px;height:8px;background:#F08080;"></div>
<div style="position:absolute;left:566px;top:420px;width:24px;height:36px;background:#6495ED;"></div>
<div style="position:absolute;left:566px;top:456px;width:24px;height:10px;background:#F08080;"></div>
<div style="position:absolute;left:637px;top:420px;width:24px;height:28px;background:#6495ED;"></div>
<div style="position:absolute;left:637px;top:448px;width:24px;height:18px;background:#F08080;"></div>
<div style="position:absolute;left:708px;top:420px;width:24px;height:32px;background:#6495ED;"></div>
<div style="position:absolute;left:708px;top:452px;width:24px;height:14px;background:#F08080;"></div>
<div style="position:absolute;left:779px;top:420px;width:24px;height:24px;background:#6495ED;"></div>
<div style="position:absolute;left:779px;top:444px;width:24px;height:22px;background:#F08080;"></div>
<div style="position:absolute;left:850px;top:420px;width:24px;height:39px;background:#6495ED;"></div>
<div style="position:absolute;left:850px;top:459px;width:24px;height:7px;background:#F08080;"></div>
<div style="position:absolute;left:921px;top:420px;width:24px;height:37px;background:#6495ED;"></div>
<div style="position:absolute;left:921px;top:457px;width:24px;height:9px;background:#F08080;"></div>
<div style="position:absolute;left:992px;top:420px;width:24px;height:38px;background:#6495ED;"></div>
<div style="position:absolute;left:992px;top:458px;width:24px;height:8px;background:#F08080;"></div>
<div style="position:absolute;left:1063px;top:420px;width:3px;height:33px;background:#6495ED;"></div>
<div style="position:absolute;left:1063px;top:453px;width:3px;height:13px;background:#F08080;"></div>
<div style="position:absolute;left:352px;top:496px;width:24px;height:25px;background:#6495ED;"></div>
<div style="position:absolute;left:352px;top:521px;width:24px;height:21px;background:#F08080;"></div>
<div style="position:absolute;left:423px;top:496px;width:25px;height:18px;background:#6495ED;"></div>
<div style="position:absolute;left:423px;top:514px;width:25px;height:28px;background:#F08080;"></div>
<div style="position:absolute;left:495px;top:496px;width:24px;height:30px;background:#6495ED;"></div>
<div style="position:absolute;left:495px;top:526px;width:24px;height:16px;background:#F08080;"></div>
<div style="position:absolute;left:566px;top:496px;width:24px;height:29px;background:#6495ED;"></div>
<div style="position:absolute;left:566px;top:525px;width:24px;height:17px;background:#F08080;"></div>
<div style="position:absolute;left:637px;top:496px;width:24px;height:23px;background:#6495ED;"></div>
<div style="position:absolute;left:637px;top:519px;width:24px;height:23px;background:#F08080;"></div>
<div style="position:absolute;left:708px;top:496px;width:24px;height:29px;background:#6495ED;"></div>
<div style="position:absolute;left:708px;top:525px;width:24px;height:17px;background:#F08080;"></div>
<div style="position:absolute;left:779px;top:496px;width:24px;height:20px;background:#6495ED;"></div>
<div style="position:absolute;left:779px;top:516px;width:24px;height:26px;background:#F08080;"></div>
<div style="position:absolute;left:850px;top:496px;width:24px;height:16px;background:#6495ED;"></div>
<div style="position:absolute;left:850px;top:512px;width:24px;height:30px;background:#F08080;"></div>
<div style="position:absolute;left:921px;top:496px;width:24px;height:29px;background:#6495ED;"></div>
<div style="position:absolute;left:921px;top:525px;width:24px;height:17px;background:#F08080;"></div>
<div style="position:absolute;left:992px;top:496px;width:24px;height:31px;background:#6495ED;"></div>
<div style="position:absolute;left:992px;top:527px;width:24px;height:15px;background:#F08080;"></div>
<div style="position:absolute;left:1063px;top:496px;width:3px;height:32px;background:#6495ED;"></div>
<div style="position:absolute;left:1063px;top:528px;width:3px;height:14px;background:#F08080;"></div>
<div style="position:absolute;left:352px;top:724px;width:24px;height:14px;background:#6495ED;"></div>
<div style="position:absolute;left:352px;top:738px;width:24px;height:11px;background:#F08080;"></div>
<div style="position:absolute;left:352px;top:749px;width:24px;height:7px;background:#20B2AA;"></div>
<div style="position:absolute;left:352px;top:756px;width:24px;height:7px;background:#800080;"></div>
<div style="position:absolute;left:352px;top:763px;width:24px;height:6px;background:#808080;"></div>
<div style="position:absolute;left:423px;top:724px;width:25px;height:7px;background:#F08080;"></div>
<div style="position:absolute;left:423px;top:731px;width:25px;height:15px;background:#800080;"></div>
<div style="position:absolute;left:423px;top:746px;width:25px;height:25px;background:#808080;"></div>
<div style="position:absolute;left:495px;top:724px;width:24px;height:15px;background:#6495ED;"></div>
<div style="position:absolute;left:495px;top:739px;width:24px;height:16px;background:#F08080;"></div>
<div style="position:absolute;left:495px;top:755px;width:24px;height:1px;background:#20B2AA;"></div>
<div style="position:absolute;left:495px;top:756px;width:24px;height:12px;background:#800080;"></div>
<div style="position:absolute;left:495px;top:768px;width:24px;height:3px;background:#808080;"></div>
<div style="position:absolute;left:566px;top:724px;width:24px;height:28px;background:#6495ED;"></div>
<div style="position:absolute;left:566px;top:752px;width:24px;height:14px;background:#F08080;"></div>
<div style="position:absolute;left:566px;top:766px;width:24px;height:4px;background:#20B2AA;"></div>
<div style="position:absolute;left:637px;top:724px;width:24px;height:17px;background:#6495ED;"></div>
<div style="position:absolute;left:637px;top:741px;width:24px;height:18px;background:#F08080;"></div>
<div style="position:absolute;left:637px;top:759px;width:24px;height:4px;background:#20B2AA;"></div>
<div style="position:absolute;left:637px;top:763px;width:24px;height:6px;background:#800080;"></div>
<div style="position:absolute;left:708px;top:724px;width:24px;height:17px;background:#6495ED;"></div>
<div style="position:absolute;left:708px;top:741px;width:24px;height:29px;background:#20B2AA;"></div>
<div style="position:absolute;left:779px;top:724px;width:24px;height:21px;background:#6495ED;"></div>
<div style="position:absolute;left:779px;top:745px;width:24px;height:23px;background:#F08080;"></div>
<div style="position:absolute;left:779px;top:768px;width:24px;height:1px;background:#800080;"></div>
<div style="position:absolute;left:850px;top:724px;width:24px;height:1px;background:#F08080;"></div>
<div style="position:absolute;left:850px;top:725px;width:24px;height:27px;background:#800080;"></div>
<div style="position:absolute;left:850px;top:752px;width:24px;height:18px;background:#808080;"></div>
<div style="position:absolute;left:921px;top:724px;width:24px;height:29px;background:#6495ED;"></div>
<div style="position:absolute;left:921px;top:753px;width:24px;height:4px;background:#F08080;"></div>
<div style="position:absolute;left:921px;top:757px;width:24px;height:13px;background:#20B2AA;"></div>
<div style="position:absolute;left:992px;top:724px;width:24px;height:47px;background:#20B2AA;"></div>
<div style="position:absolute;left:1063px;top:724px;width:3px;height:23px;background:#F08080;"></div>
<div style="position:absolute;left:1063px;top:747px;width:3px;height:5px;background:#800080;"></div>
<div style="position:absolute;left:1063px;top:752px;width:3px;height:17px;background:#808080;"></div>
<svg style="position:absolute;left:351px;top:572px;overflow:hidden" width="26" height="48" viewBox="351 572 26 48"><rect x="362" y="572" width="4" height="11" fill="#000"/><rect x="362" y="608" width="4" height="11" fill="#000"/><path d="M352 595.5 L364 583 L376 595.5 L364 608 Z" fill="#00FFFF"/></svg>
<svg style="position:absolute;left:422px;top:572px;overflow:hidden" width="26" height="48" viewBox="422 572 26 48"><rect x="433" y="572" width="4" height="23" fill="#000"/><rect x="433" y="613" width="4" height="6" fill="#000"/><path d="M423 604.0 L435 595 L447 604.0 L435 613 Z" fill="#00FFFF"/></svg>
<svg style="position:absolute;left:494px;top:572px;overflow:hidden" width="26" height="48" viewBox="494 572 26 48"><rect x="505" y="572" width="4" height="47" fill="#000"/><rect x="495" y="618" width="24" height="1" fill="#00FFFF"/></svg>
<svg style="position:absolute;left:565px;top:572px;overflow:hidden" width="26" height="48" viewBox="565 572 26 48"><rect x="576" y="572" width="4" height="15" fill="#000"/><rect x="576" y="611" width="4" height="8" fill="#000"/><path d="M566 599.0 L578 587 L590 599.0 L578 611 Z" fill="#00FFFF"/></svg>
<svg style="position:absolute;left:636px;top:572px;overflow:hidden" width="26" height="48" viewBox="636 572 26 48"><rect x="647" y="572" width="4" height="47" fill="#000"/><rect x="637" y="607" width="24" height="1" fill="#00FFFF"/></svg>
<svg style="position:absolute;left:707px;top:572px;overflow:hidden" width="26" height="48" viewBox="707 572 26 48"><rect x="718" y="593" width="4" height="26" fill="#000"/><path d="M708 582.5 L720 572 L732 582.5 L720 593 Z" fill="#00FFFF"/></svg>
<svg style="position:absolute;left:778px;top:572px;overflow:hidden" width="26" height="48" viewBox="778 572 26 48"><rect x="789" y="572" width="4" height="16" fill="#000"/><rect x="789" y="599" width="4" height="20" fill="#000"/><path d="M779 593.5 L791 588 L803 593.5 L791 599 Z" fill="#00FFFF"/></svg>
<svg style="position:absolute;left:849px;top:572px;overflow:hidden" width="26" height="48" viewBox="849 572 26 48"><rect x="860" y="572" width="4" height="22" fill="#000"/><rect x="860" y="613" width="4" height="6" fill="#000"/><path d="M850 603.5 L862 594 L874 603.5 L862 613 Z" fill="#00FFFF"/></svg>
<svg style="position:absolute;left:920px;top:572px;overflow:hidden" width="26" height="48" viewBox="920 572 26 48"><rect x="931" y="572" width="4" height="10" fill="#000"/><rect x="931" y="608" width="4" height="11" fill="#000"/><path d="M921 595.0 L933 582 L945 595.0 L933 608 Z" fill="#00FFFF"/></svg>
<svg style="position:absolute;left:991px;top:572px;overflow:hidden" width="26" height="48" viewBox="991 572 26 48"><rect x="1002" y="572" width="4" height="47" fill="#000"/><rect x="992" y="595" width="24" height="1" fill="#00FFFF"/></svg>
<svg style="position:absolute;left:1062px;top:572px;overflow:hidden" width="4" height="48" viewBox="1062 572 4 48"><rect x="1073" y="572" width="4" height="47" fill="#000"/><rect x="1063" y="612" width="24" height="1" fill="#00FFFF"/></svg>
<svg style="position:absolute;left:218px;top:572px;overflow:hidden" width="16" height="49" viewBox="218 572 16 49"><rect x="224" y="572" width="4" height="11" fill="#000"/><rect x="224" y="607" width="4" height="12" fill="#000"/><path d="M219 595.0 L226 583 L233 595.0 L226 607 Z" fill="#00FFFF"/></svg>
<div class="t" style="left:243px;top:568px;color:#000;">4.00</div>
<div class="t" style="left:243px;top:591px;color:#000;">2.00</div>
<div class="t" style="left:243px;top:615px;color:#000;">0.00</div>
<svg style="position:absolute;left:351px;top:648px;overflow:hidden" width="26" height="48" viewBox="351 648 26 48"><rect x="362" y="648" width="4" height="24" fill="#000"/><path d="M352 685.0 L364 672 L376 685.0 L364 698 Z" fill="#00FFFF"/></svg>
<svg style="position:absolute;left:422px;top:648px;overflow:hidden" width="26" height="48" viewBox="422 648 26 48"><rect x="433" y="648" width="4" height="47" fill="#000"/><rect x="423" y="695" width="24" height="1" fill="#00FFFF"/></svg>
<svg style="position:absolute;left:494px;top:648px;overflow:hidden" width="26" height="48" viewBox="494 648 26 48"><rect x="505" y="648" width="4" height="47" fill="#000"/><rect x="495" y="695" width="24" height="1" fill="#00FFFF"/></svg>
<svg style="position:absolute;left:565px;top:648px;overflow:hidden" width="26" height="48" viewBox="565 648 26 48"><rect x="576" y="648" width="4" height="15" fill="#000"/><rect x="576" y="688" width="4" height="7" fill="#000"/><path d="M566 675.5 L578 663 L590 675.5 L578 688 Z" fill="#00FFFF"/></svg>
<svg style="position:absolute;left:636px;top:648px;overflow:hidden" width="26" height="48" viewBox="636 648 26 48"><rect x="647" y="648" width="4" height="47" fill="#000"/><rect x="637" y="695" width="24" height="1" fill="#00FFFF"/></svg>
<svg style="position:absolute;left:707px;top:648px;overflow:hidden" width="26" height="48" viewBox="707 648 26 48"><rect x="718" y="648" width="4" height="2" fill="#000"/><rect x="718" y="679" width="4" height="16" fill="#000"/><path d="M708 664.5 L720 650 L732 664.5 L720 679 Z" fill="#00FFFF"/></svg>
<svg style="position:absolute;left:778px;top:648px;overflow:hidden" width="26" height="48" viewBox="778 648 26 48"><rect x="789" y="648" width="4" height="47" fill="#000"/><rect x="779" y="695" width="24" height="1" fill="#00FFFF"/></svg>
<svg style="position:absolute;left:849px;top:648px;overflow:hidden" width="26" height="48" viewBox="849 648 26 48"><rect x="860" y="648" width="4" height="16" fill="#000"/><rect x="860" y="682" width="4" height="13" fill="#000"/><path d="M850 673.0 L862 664 L874 673.0 L862 682 Z" fill="#00FFFF"/></svg>
<svg style="position:absolute;left:920px;top:648px;overflow:hidden" width="26" height="48" viewBox="920 648 26 48"><rect x="931" y="648" width="4" height="7" fill="#000"/><rect x="931" y="683" width="4" height="12" fill="#000"/><path d="M921 669.0 L933 655 L945 669.0 L933 683 Z" fill="#00FFFF"/></svg>
<svg style="position:absolute;left:991px;top:648px;overflow:hidden" width="26" height="48" viewBox="991 648 26 48"><rect x="1002" y="648" width="4" height="47" fill="#000"/><rect x="992" y="695" width="24" height="1" fill="#00FFFF"/></svg>
<svg style="position:absolute;left:1062px;top:648px;overflow:hidden" width="4" height="48" viewBox="1062 648 4 48"><rect x="1073" y="648" width="4" height="47" fill="#000"/><rect x="1063" y="685" width="24" height="1" fill="#00FFFF"/></svg>
<svg style="position:absolute;left:218px;top:648px;overflow:hidden" width="16" height="49" viewBox="218 648 16 49"><rect x="224" y="648" width="4" height="24" fill="#000"/><path d="M219 684.0 L226 672 L233 684.0 L226 696 Z" fill="#00FFFF"/></svg>
<div class="t" style="left:243px;top:644px;color:#000;">5.00</div>
<div class="t" style="left:243px;top:667px;color:#000;">1.00</div>
<div class="t" style="left:243px;top:691px;color:#000;">0.00</div>
<svg style="position:absolute;left:351px;top:800px;overflow:hidden" width="26" height="48" viewBox="351 800 26 48"><rect x="362" y="800" width="4" height="14" fill="#000"/><rect x="362" y="843" width="4" height="4" fill="#000"/><path d="M352 828.5 L364 814 L376 828.5 L364 843 Z" fill="#00FFFF"/></svg>
<svg style="position:absolute;left:422px;top:800px;overflow:hidden" width="26" height="48" viewBox="422 800 26 48"><rect x="433" y="800" width="4" height="26" fill="#000"/><path d="M423 838.0 L435 826 L447 838.0 L435 850 Z" fill="#00FFFF"/></svg>
<svg style="position:absolute;left:494px;top:800px;overflow:hidden" width="26" height="48" viewBox="494 800 26 48"><rect x="505" y="800" width="4" height="20" fill="#000"/><path d="M495 833.5 L507 820 L519 833.5 L507 847 Z" fill="#00FFFF"/></svg>
<svg style="position:absolute;left:565px;top:800px;overflow:hidden" width="26" height="48" viewBox="565 800 26 48"><rect x="576" y="800" width="4" height="4" fill="#000"/><rect x="576" y="828" width="4" height="19" fill="#000"/><path d="M566 816.0 L578 804 L590 816.0 L578 828 Z" fill="#00FFFF"/></svg>
<svg style="position:absolute;left:636px;top:800px;overflow:hidden" width="26" height="48" viewBox="636 800 26 48"><rect x="647" y="800" width="4" height="35" fill="#000"/><rect x="647" y="845" width="4" height="2" fill="#000"/><path d="M637 840.0 L649 835 L661 840.0 L649 845 Z" fill="#00FFFF"/></svg>
<svg style="position:absolute;left:707px;top:800px;overflow:hidden" width="26" height="48" viewBox="707 800 26 48"><rect x="718" y="800" width="4" height="14" fill="#000"/><rect x="718" y="842" width="4" height="5" fill="#000"/><path d="M708 828.0 L720 814 L732 828.0 L720 842 Z" fill="#00FFFF"/></svg>
<svg style="position:absolute;left:778px;top:800px;overflow:hidden" width="26" height="48" viewBox="778 800 26 48"><rect x="789" y="800" width="4" height="26" fill="#000"/><path d="M779 838.0 L791 826 L803 838.0 L791 850 Z" fill="#00FFFF"/></svg>
<svg style="position:absolute;left:849px;top:800px;overflow:hidden" width="26" height="48" viewBox="849 800 26 48"><rect x="860" y="800" width="4" height="15" fill="#000"/><rect x="860" y="830" width="4" height="17" fill="#000"/><path d="M850 822.5 L862 815 L874 822.5 L862 830 Z" fill="#00FFFF"/></svg>
<svg style="position:absolute;left:920px;top:800px;overflow:hidden" width="26" height="48" viewBox="920 800 26 48"><rect x="931" y="816" width="4" height="31" fill="#000"/><path d="M921 808.0 L933 800 L945 808.0 L933 816 Z" fill="#00FFFF"/></svg>
<svg style="position:absolute;left:991px;top:800px;overflow:hidden" width="26" height="48" viewBox="991 800 26 48"><rect x="1002" y="800" width="4" height="4" fill="#000"/><rect x="1002" y="824" width="4" height="23" fill="#000"/><path d="M992 814.0 L1004 804 L1016 814.0 L1004 824 Z" fill="#00FFFF"/></svg>
<svg style="position:absolute;left:1062px;top:800px;overflow:hidden" width="4" height="48" viewBox="1062 800 4 48"><rect x="1073" y="800" width="4" height="47" fill="#000"/><rect x="1063" y="837" width="24" height="1" fill="#00FFFF"/></svg>
<svg style="position:absolute;left:218px;top:800px;overflow:hidden" width="16" height="49" viewBox="218 800 16 49"><rect x="224" y="800" width="4" height="14" fill="#000"/><rect x="224" y="843" width="4" height="4" fill="#000"/><path d="M219 828.5 L226 814 L233 828.5 L226 843 Z" fill="#00FFFF"/></svg>
<div class="t" style="left:243px;top:796px;color:#000;">5.00</div>
<div class="t" style="left:243px;top:819px;color:#000;">2.00</div>
<div class="t" style="left:243px;top:843px;color:#000;">0.00</div>
<div class="dot" style="left:220px;top:872px;background:#6495ED;"></div>
<div class="t" style="left:243px;top:871px;color:#000;">40000 - 70000</div>
<div style="position:absolute;left:352px;top:876px;width:24px;height:10px;background:#6495ED;"></div>
<div style="position:absolute;left:423px;top:876px;width:24px;height:10px;background:#F08080;"></div>
<div style="position:absolute;left:495px;top:876px;width:24px;height:10px;background:#6495ED;"></div>
<div style="position:absolute;left:566px;top:876px;width:24px;height:10px;background:#6495ED;"></div>
<div style="position:absolute;left:637px;top:876px;width:24px;height:10px;background:#6495ED;"></div>
<div style="position:absolute;left:708px;top:876px;width:24px;height:10px;background:#800080;"></div>
<div style="position:absolute;left:779px;top:876px;width:24px;height:10px;background:#6495ED;"></div>
<div style="position:absolute;left:850px;top:876px;width:24px;height:10px;background:#6495ED;"></div>
<div style="position:absolute;left:921px;top:876px;width:24px;height:10px;background:#20B2AA;"></div>
<div style="position:absolute;left:992px;top:876px;width:24px;height:10px;background:#6495ED;"></div>
<div style="position:absolute;left:1063px;top:876px;width:3px;height:10px;background:#6495ED;"></div>
<div style="position:absolute;left:708px;top:876px;width:24px;height:1px;background:#20B2AA;"></div>
<div style="position:absolute;left:1066px;top:139px;width:12px;height:747px;background:#ECECEC;"></div>
<div style="position:absolute;left:1066px;top:139px;width:12px;height:18px;background:#F3F3F3;"></div>
<svg style="position:absolute;left:1070px;top:145px" width="8" height="5"><path d="M0 4 L3.5 0 L7 4 Z" fill="#444"/></svg>
<div style="position:absolute;left:1067px;top:157px;width:14px;height:635px;border:1px solid #9A9A9A;border-radius:2px;background:linear-gradient(90deg,#FBFBFB,#EAEAEA 50%,#D6D6D6);"></div>
<div style="position:absolute;left:1071px;top:470px;width:7px;height:2px;background:linear-gradient(90deg,#303030,#9A9A9A);"></div>
<div style="position:absolute;left:1071px;top:473px;width:7px;height:2px;background:linear-gradient(90deg,#303030,#9A9A9A);"></div>
<div style="position:absolute;left:1071px;top:476px;width:7px;height:2px;background:linear-gradient(90deg,#303030,#9A9A9A);"></div>
<svg style="position:absolute;left:1071px;top:871px" width="8" height="5"><path d="M0 0 H7 L3.5 4 Z" fill="#444"/></svg>
<div style="position:absolute;left:1078px;top:3px;width:1px;height:880px;background:#3A3A3A;"></div>
<div style="position:absolute;left:1079px;top:4px;width:1px;height:881px;background:#5E5E5E;"></div>
<div style="position:absolute;left:1080px;top:5px;width:1px;height:881px;background:#9C9C9C;"></div>
<div style="position:absolute;left:1081px;top:6px;width:1px;height:880px;background:#D4D4D4;"></div>
<div style="position:absolute;left:1078px;top:0px;width:4px;height:6px;background:#FFFFFF;"></div>
<div style="position:absolute;left:1078px;top:0;width:4px;height:10px;background:linear-gradient(#FFFFFF,rgba(255,255,255,0));"></div>
<div style="position:absolute;left:3px;top:882px;width:1076px;height:1px;background:#3A3A3A;"></div>
<div style="position:absolute;left:4px;top:883px;width:1076px;height:1px;background:#5E5E5E;"></div>
<div style="position:absolute;left:5px;top:884px;width:1076px;height:1px;background:#9C9C9C;"></div>
<div style="position:absolute;left:6px;top:885px;width:1076px;height:1px;background:#D4D4D4;"></div>
<div style="position:absolute;left:0;top:882px;width:8px;height:4px;background:linear-gradient(90deg,#FFFFFF,rgba(255,255,255,0));"></div>
<svg style="position:absolute;left:920px;top:800px" width="160" height="82" viewBox="920 800 160 82">
<defs>
<radialGradient id="gc" cx="0.55" cy="0.6" r="0.65"><stop offset="0" stop-color="#BFDDA8"/><stop offset="0.8" stop-color="#B2D49A"/><stop offset="1" stop-color="#9DB98C"/></radialGradient>
<filter id="blur2" x="-20%" y="-50%" width="140%" height="200%"><feGaussianBlur stdDeviation="2"/></filter>
<filter id="blur1" x="-20%" y="-50%" width="140%" height="200%"><feGaussianBlur stdDeviation="1.2"/></filter>
</defs>
<g opacity="0.35" filter="url(#blur2)"><path d="M978 846 H1064" stroke="#606060" stroke-width="5"/></g>
<g stroke="#FFFFFF" stroke-width="6" fill="none" opacity="0.55" filter="url(#blur1)" stroke-linecap="round">
<path d="M978 825 H986 M982 819 V842 M978 835 L987 830 M989 824 H1001 M995 818 V829 M990 829 H1000 L991 842 M992 833 L1002 842"/>
<path d="M1006 825 H1032 M1019 818 V842 M1018 826 L1008 839 M1020 826 L1031 839"/>
<path d="M1036 842 V820 H1061 V839 Q1061 842 1057 842 M1041 826 L1048 837 M1048 826 L1041 837 M1050 826 L1057 837 M1057 826 L1050 837"/>
</g>
<circle cx="955" cy="830" r="17.5" fill="url(#gc)"/>
<path d="M942 822 Q945 818 953 819 M950.5 819.5 L946 840.5 M941.5 841 Q945 839.5 950 841.5 M955 821 Q961 818.5 968.5 819.5 Q962 828 958.5 842" stroke="#FFFFFF" stroke-width="3" fill="none" stroke-linecap="round"/>
<g stroke="#7F947F" stroke-width="2.8" fill="none" opacity="0.9" stroke-linecap="square">
<path d="M978 825 H986 M982 819 V842 L980 841 M978 835 L987 830 M989 824 H1001 M995 818 V829 M990 829 H1000 L991 842 M992 833 L1002 842"/>
<path d="M1006 825 H1032 M1019 818 V842 M1018 826 L1008 839 M1020 826 L1031 839 M1025 818 L1027 821"/>
<path d="M1036 842 V820 H1061 V839 Q1061 842 1057 842 M1041 826 L1048 837 M1048 826 L1041 837 M1050 826 L1057 837 M1057 826 L1050 837"/>
</g>
<text x="948" y="867" font-family="Liberation Sans" font-size="21" letter-spacing="0.9" fill="none" stroke="#FFFFFF" stroke-width="3" opacity="0.5">www.itjs.cn</text>
<text x="948" y="867" font-family="Liberation Sans" font-size="21" letter-spacing="0.9" fill="#747474" stroke="#747474" stroke-width="0.45">www.itjs.cn</text>
<g stroke="#FFFFFF" stroke-width="3" fill="none" opacity="0.6">
<path d="M932 877 V864 M936 864 V877 M932 870 H936 M938 864 H944 M939 864 V877 M939 869 H944 L941 877 M941 871 L945 877"/>
<path d="M948 870 H956 M952 864 V878 M952 870 L948 876 M958 865 H963 M958 869 H963 L958 877 M960 871 L964 877"/>
<path d="M967 866 H974 M968 869 V877 M968 869 H974 M971 869 V877 M976 864 V868 H982 M978 868 V877 M976 872 H983"/>
<path d="M986 866 H999 M991 864 L987 877 M990 870 H998 V877 M990 873 H998"/>
<path d="M1019 864 V878 M1019 864 H1023 L1021 869 L1023 873 H1019 M1026 866 H1034 M1030 864 V877 M1027 870 L1026 876 M1033 870 L1035 876"/>
<path d="M1038 865 L1048 871 M1048 865 L1038 871 M1036 872 H1050 M1038 874 V878 M1038 874 H1048 V878 M1043 871 V878"/>
<path d="M1054 866 H1068 M1061 863 V866 M1056 868 H1066 V872 H1056 Z M1056 874 H1066 M1053 877 H1069 M1061 872 V878"/>
</g>
<g stroke="#8E8E8E" stroke-width="1" fill="none">
<path d="M932 877 V864 M936 864 V877 M932 870 H936 M938 864 H944 M939 864 V877 M939 869 H944 L941 877 M941 871 L945 877"/>
<path d="M948 870 H956 M952 864 V878 M952 870 L948 876 M958 865 H963 M958 869 H963 L958 877 M960 871 L964 877"/>
<path d="M967 866 H974 M968 869 V877 M968 869 H974 M971 869 V877 M976 864 V868 H982 M978 868 V877 M976 872 H983"/>
<path d="M986 866 H999 M991 864 L987 877 M990 870 H998 V877 M990 873 H998"/>
<path d="M1019 864 V878 M1019 864 H1023 L1021 869 L1023 873 H1019 M1026 866 H1034 M1030 864 V877 M1027 870 L1026 876 M1033 870 L1035 876"/>
<path d="M1038 865 L1048 871 M1048 865 L1038 871 M1036 872 H1050 M1038 874 V878 M1038 874 H1048 V878 M1043 871 V878"/>
<path d="M1054 866 H1068 M1061 863 V866 M1056 868 H1066 V872 H1056 Z M1056 874 H1066 M1053 877 H1069 M1061 872 V878"/>
</g>
<text x="1002" y="877" font-family="Liberation Sans" font-size="15" fill="#7E7E7E" stroke="#FFFFFF" stroke-width="0.3">@</text>
</svg>
</body></html>
